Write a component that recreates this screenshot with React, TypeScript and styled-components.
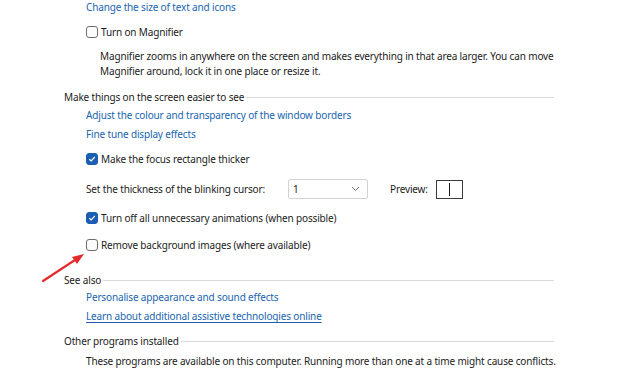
import styled, { createGlobalStyle } from "styled-components";

const GlobalStyle = createGlobalStyle`
  html, body {
    margin: 0;
    padding: 0;
    background: #ffffff;
  }
  body {
    width: 640px;
    height: 373px;
    overflow: hidden;
    font-family: "Noto Sans", "Open Sans", sans-serif;
    font-size: 10px;
    letter-spacing: -0.15px;
    color: #1b1b1b;
  }
`;

const Page = styled.div`
  position: relative;
  width: 640px;
  height: 373px;
  overflow: hidden;
  padding-left: 64px;
  box-sizing: border-box;
`;

const Column = styled.div`
  display: flex;
  flex-direction: column;
  width: 490px;
`;

const Row = styled.div<{ $top: number; $indent?: number }>`
  display: flex;
  align-items: center;
  height: 16px;
  line-height: 16px;
  margin-top: ${(p) => p.$top}px;
  padding-left: ${(p) => p.$indent ?? 22}px;
  white-space: nowrap;
`;

const Link = styled.a<{ $underline?: boolean }>`
  color: #2065b0;
  text-decoration: ${(p) => (p.$underline ? "underline" : "none")};
  text-underline-offset: 2px;
  cursor: pointer;
`;

const Box = styled.span<{ $checked?: boolean }>`
  width: 12px;
  height: 12px;
  box-sizing: border-box;
  border-radius: 3px;
  margin-right: 3px;
  display: inline-flex;
  align-items: center;
  justify-content: center;
  border: 1px solid ${(p) => (p.$checked ? "#1a5fb4" : "#6e6e6e")};
  background: ${(p) => (p.$checked ? "#1a5fb4" : "#fbfbfb")};
`;

const Description = styled.p`
  margin: 9px 0 0 36px;
  line-height: 15px;
  white-space: nowrap;
`;

const SectionHeader = styled.div<{ $top: number }>`
  display: flex;
  align-items: center;
  height: 16px;
  margin-top: ${(p) => p.$top}px;
  white-space: nowrap;

  &::after {
    content: "";
    flex: 1;
    height: 1px;
    margin-left: 2px;
    background: #d9d9d9;
  }
`;

const CursorRow = styled.div`
  display: flex;
  align-items: center;
  height: 20px;
  margin-top: 12px;
  padding-left: 22px;
  white-space: nowrap;
`;

const CursorLabel = styled.span`
  width: 202px;
`;

const Select = styled.div`
  width: 80px;
  height: 20px;
  box-sizing: border-box;
  border: 1px solid #d2d2d2;
  border-radius: 2px;
  display: flex;
  align-items: center;
  justify-content: space-between;
  padding: 0 7px 0 4px;
`;

const PreviewLabel = styled.span`
  margin-left: 22px;
`;

const PreviewBox = styled.div`
  width: 27px;
  height: 19px;
  box-sizing: border-box;
  border: 1px solid #3a3a3a;
  margin-left: 8px;
  display: flex;
  align-items: center;
  justify-content: center;

  &::before {
    content: "";
    width: 1px;
    height: 13px;
    background: #1b1b1b;
  }
`;

const Arrow = styled.svg`
  position: absolute;
  left: 38px;
  top: 248px;
`;

function Check({ checked, label }: { checked?: boolean; label: string }) {
  return (
    <>
      <Box $checked={checked}>
        {checked && (
          <svg width="8" height="8" viewBox="0 0 8 8">
            <path d="M1.3 4.2 L3.2 6 L6.8 2" fill="none" stroke="#fff" strokeWidth="1.2" />
          </svg>
        )}
      </Box>
      {label}
    </>
  );
}

export default function App() {
  return (
    <Page>
      <GlobalStyle />
      <Column>
        <Row $top={-1}>
          <Link>Change the size of text and icons</Link>
        </Row>
        <Row $top={9}>
          <Check label="Turn on Magnifier" />
        </Row>
        <Description>
          Magnifier zooms in anywhere on the screen and makes everything in that area larger. You can move
          <br />
          Magnifier around, lock it in one place or resize it.
        </Description>
        <SectionHeader $top={10}>Make things on the screen easier to see</SectionHeader>
        <Row $top={2}>
          <Link>Adjust the colour and transparency of the window borders</Link>
        </Row>
        <Row $top={3}>
          <Link>Fine tune display effects</Link>
        </Row>
        <Row $top={9}>
          <Check checked label="Make the focus rectangle thicker" />
        </Row>
        <CursorRow>
          <CursorLabel>Set the thickness of the blinking cursor:</CursorLabel>
          <Select>
            1
            <svg width="9" height="6" viewBox="0 0 9 6">
              <path d="M1 1 L4.5 4.5 L8 1" fill="none" stroke="#707070" strokeWidth="1" />
            </svg>
          </Select>
          <PreviewLabel>Preview:</PreviewLabel>
          <PreviewBox />
        </CursorRow>
        <Row $top={11}>
          <Check checked label="Turn off all unnecessary animations (when possible)" />
        </Row>
        <Row $top={11}>
          <Check label="Remove background images (where available)" />
        </Row>
        <SectionHeader $top={19}>See also</SectionHeader>
        <Row $top={1}>
          <Link>Personalise appearance and sound effects</Link>
        </Row>
        <Row $top={3}>
          <Link $underline>Learn about additional assistive technologies online</Link>
        </Row>
        <SectionHeader $top={9}>Other programs installed</SectionHeader>
        <Row $top={4}>
          These programs are available on this computer. Running more than one at a time might cause conflicts.
        </Row>
      </Column>
      <Arrow width="52" height="40" viewBox="0 0 52 40">
        <line x1="5" y1="33" x2="40" y2="10" stroke="#e32b2b" strokeWidth="2.2" strokeLinecap="round" />
        <path d="M46 6 L34 9 L39 16 Z" fill="#e32b2b" />
      </Arrow>
    </Page>
  );
}
